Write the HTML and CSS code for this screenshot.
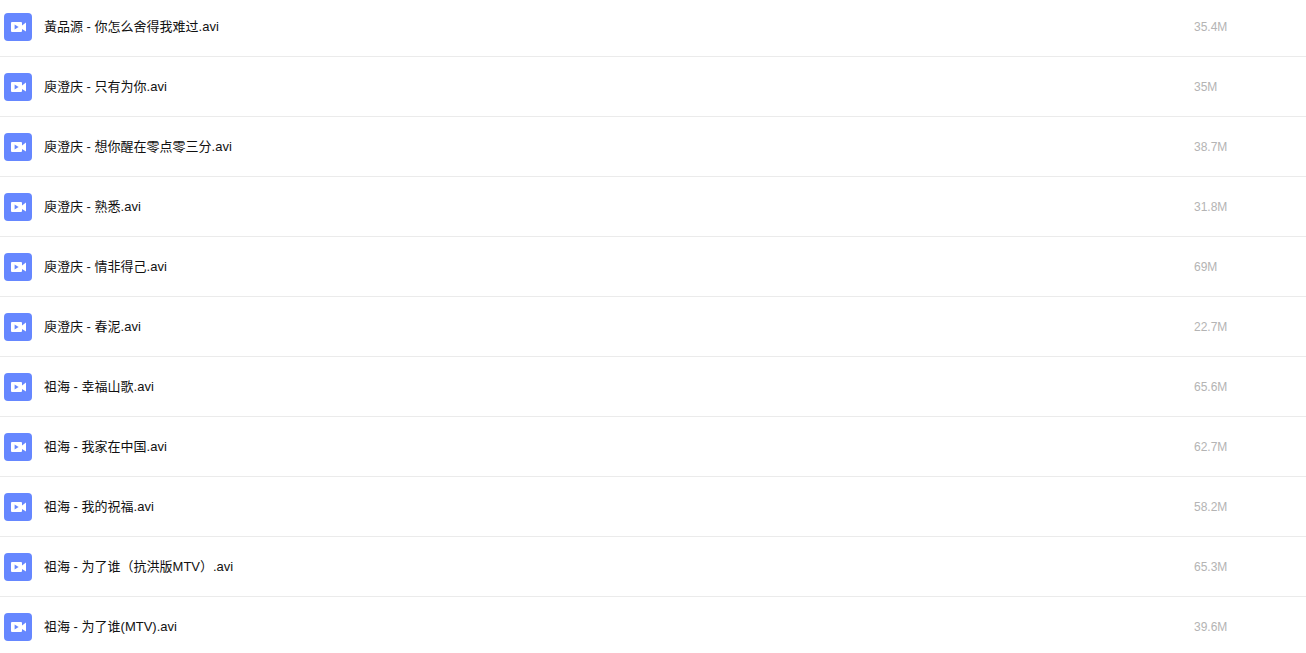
FILE: index.html
```html
<!DOCTYPE html>
<html lang="zh-CN">

<head>
    <meta charset="UTF-8">
    <meta name="viewport" content="width=device-width, initial-scale=1.0">
    <title>文件列表</title>
    <link rel="stylesheet" href="styles.css">
</head>

<body>
    <!-- 视频图标 -->
    <svg class="sprite" aria-hidden="true">
        <symbol id="icon-video" viewBox="0 0 28 28">
            <rect width="28" height="28" rx="4" fill="#6687ff" />
            <path fill="#fff" d="M8 9h9a1 1 0 0 1 1 1v2.4L22 9.6v9L18 16v2a1 1 0 0 1-1 1H8a1 1 0 0 1-1-1v-8a1 1 0 0 1 1-1z" />
            <path fill="#6687ff" d="M10.6 11.6l4 2.5-4 2.5z" />
        </symbol>
    </svg>

    <ul class="file-list">
        <li class="file-item">
            <svg class="file-icon"><use href="#icon-video" /></svg>
            <span class="file-name">黃品源 - 你怎么舍得我难过.avi</span>
            <span class="file-size">35.4M</span>
        </li>
        <li class="file-item">
            <svg class="file-icon"><use href="#icon-video" /></svg>
            <span class="file-name">庾澄庆 - 只有为你.avi</span>
            <span class="file-size">35M</span>
        </li>
        <li class="file-item">
            <svg class="file-icon"><use href="#icon-video" /></svg>
            <span class="file-name">庾澄庆 - 想你醒在零点零三分.avi</span>
            <span class="file-size">38.7M</span>
        </li>
        <li class="file-item">
            <svg class="file-icon"><use href="#icon-video" /></svg>
            <span class="file-name">庾澄庆 - 熟悉.avi</span>
            <span class="file-size">31.8M</span>
        </li>
        <li class="file-item">
            <svg class="file-icon"><use href="#icon-video" /></svg>
            <span class="file-name">庾澄庆 - 情非得己.avi</span>
            <span class="file-size">69M</span>
        </li>
        <li class="file-item">
            <svg class="file-icon"><use href="#icon-video" /></svg>
            <span class="file-name">庾澄庆 - 春泥.avi</span>
            <span class="file-size">22.7M</span>
        </li>
        <li class="file-item">
            <svg class="file-icon"><use href="#icon-video" /></svg>
            <span class="file-name">祖海 - 幸福山歌.avi</span>
            <span class="file-size">65.6M</span>
        </li>
        <li class="file-item">
            <svg class="file-icon"><use href="#icon-video" /></svg>
            <span class="file-name">祖海 - 我家在中国.avi</span>
            <span class="file-size">62.7M</span>
        </li>
        <li class="file-item">
            <svg class="file-icon"><use href="#icon-video" /></svg>
            <span class="file-name">祖海 - 我的祝福.avi</span>
            <span class="file-size">58.2M</span>
        </li>
        <li class="file-item">
            <svg class="file-icon"><use href="#icon-video" /></svg>
            <span class="file-name">祖海 - 为了谁（抗洪版MTV）.avi</span>
            <span class="file-size">65.3M</span>
        </li>
        <li class="file-item">
            <svg class="file-icon"><use href="#icon-video" /></svg>
            <span class="file-name">祖海 - 为了谁(MTV).avi</span>
            <span class="file-size">39.6M</span>
        </li>
    </ul>
</body>

</html>
```
FILE: styles.css
```css
* {
    margin: 0;
    padding: 0;
    box-sizing: border-box;
}

body {
    background-color: #fff;
    font-family: "Liberation Sans", "Noto Sans CJK SC", sans-serif;
    font-size: 13px;
    line-height: 20px;
    color: #111;
}

.sprite {
    display: none;
}

.file-list {
    list-style: none;
}

.file-item {
    display: flex;
    align-items: center;
    gap: 12px;
    padding: 16px 0 15px 4px;
    border-bottom: 1px solid #ebebeb;
}

.file-item:first-child {
    padding-top: 13px;
}

.file-item:last-child {
    padding-bottom: 12px;
    border-bottom: 0;
}

.file-icon {
    flex: none;
    width: 28px;
    height: 28px;
}

.file-name {
    flex: 1;
}

.file-size {
    flex: none;
    width: 112px;
    font-size: 12px;
    color: #b4b4b4;
}
```
